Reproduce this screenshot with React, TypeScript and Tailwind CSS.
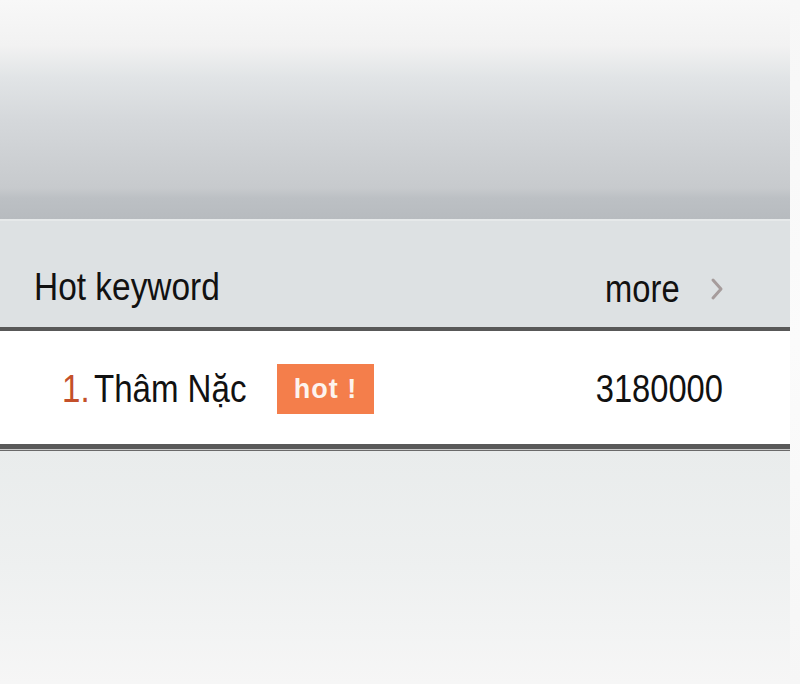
const font = { fontFamily: '"Liberation Sans", Arial, sans-serif' }

function Chevron() {
  return (
    <svg
      viewBox="0 0 14 24"
      className="ml-[30px] mt-[2px] h-[24px] w-[14px] text-[#a69c9c]"
      fill="none"
      stroke="currentColor"
      strokeWidth={3}
      strokeLinecap="round"
      strokeLinejoin="round"
    >
      <path d="M3 3 L11 12 L3 21" />
    </svg>
  )
}

export default function App() {
  return (
    <div
      className="flex h-[684px] w-[800px] overflow-hidden bg-[#f4f4f4] text-[#111111]"
      style={font}
    >
      <div className="flex w-[790px] flex-col">
        {/* top faded banner */}
        <div className="h-[219px] bg-[linear-gradient(to_bottom,#f8f8f8_0px,#f2f2f2_45px,#e1e4e6_78px,#d5d8db_120px,#c7cacd_188px,#bcc0c4_198px,#b7bbbf_219px)]" />

        {/* header */}
        <div className="flex h-[108px] items-start justify-between border-t-2 border-[#e6e9ea] bg-[#dde1e3] pl-[34px] pr-[66px] pt-[47px]">
          <span className="inline-block origin-left scale-x-[0.88] text-[38px] leading-none">
            Hot keyword
          </span>
          <div className="flex items-center">
            <span className="inline-block origin-right scale-x-[0.86] pt-[2px] text-[38px] leading-none">
              more
            </span>
            <Chevron />
          </div>
        </div>

        <div className="h-[4px] bg-[#585858]" />

        {/* keyword row */}
        <div className="flex h-[113px] items-start bg-white pl-[62px] pr-[67px] pt-[33px]">
          <div className="flex h-[50px] w-full items-center justify-between">
            <div className="flex items-center">
              <div className="w-[215px]">
                <span className="inline-block origin-left scale-x-[0.87] whitespace-nowrap text-[38px] leading-none">
                  <span className="text-[#c4502a]">1.</span>
                  <span className="ml-[5px]">Thâm Nặc</span>
                </span>
              </div>
              <span className="flex h-[50px] w-[97px] items-center justify-center bg-[#f47e4b] text-[27px] font-bold tracking-[1px] text-[#fdf3ee]">
                hot !
              </span>
            </div>
            <span className="inline-block origin-right scale-x-[0.86] text-[38px] leading-none">
              3180000
            </span>
          </div>
        </div>

        {/* double rule */}
        <div className="h-[5px] bg-[#595959]" />
        <div className="h-px bg-[#c9c9c9]" />
        <div className="h-px bg-[#6a6a6a]" />

        {/* lower area */}
        <div className="flex-1 bg-[linear-gradient(to_bottom,#e9ecec,#eef0f0_50%,#f6f6f6)]" />
      </div>
      <div className="flex-1 bg-[linear-gradient(to_bottom,#f7f7f7,#fbfbfb_50%,#f6f6f6)]" />
    </div>
  )
}
